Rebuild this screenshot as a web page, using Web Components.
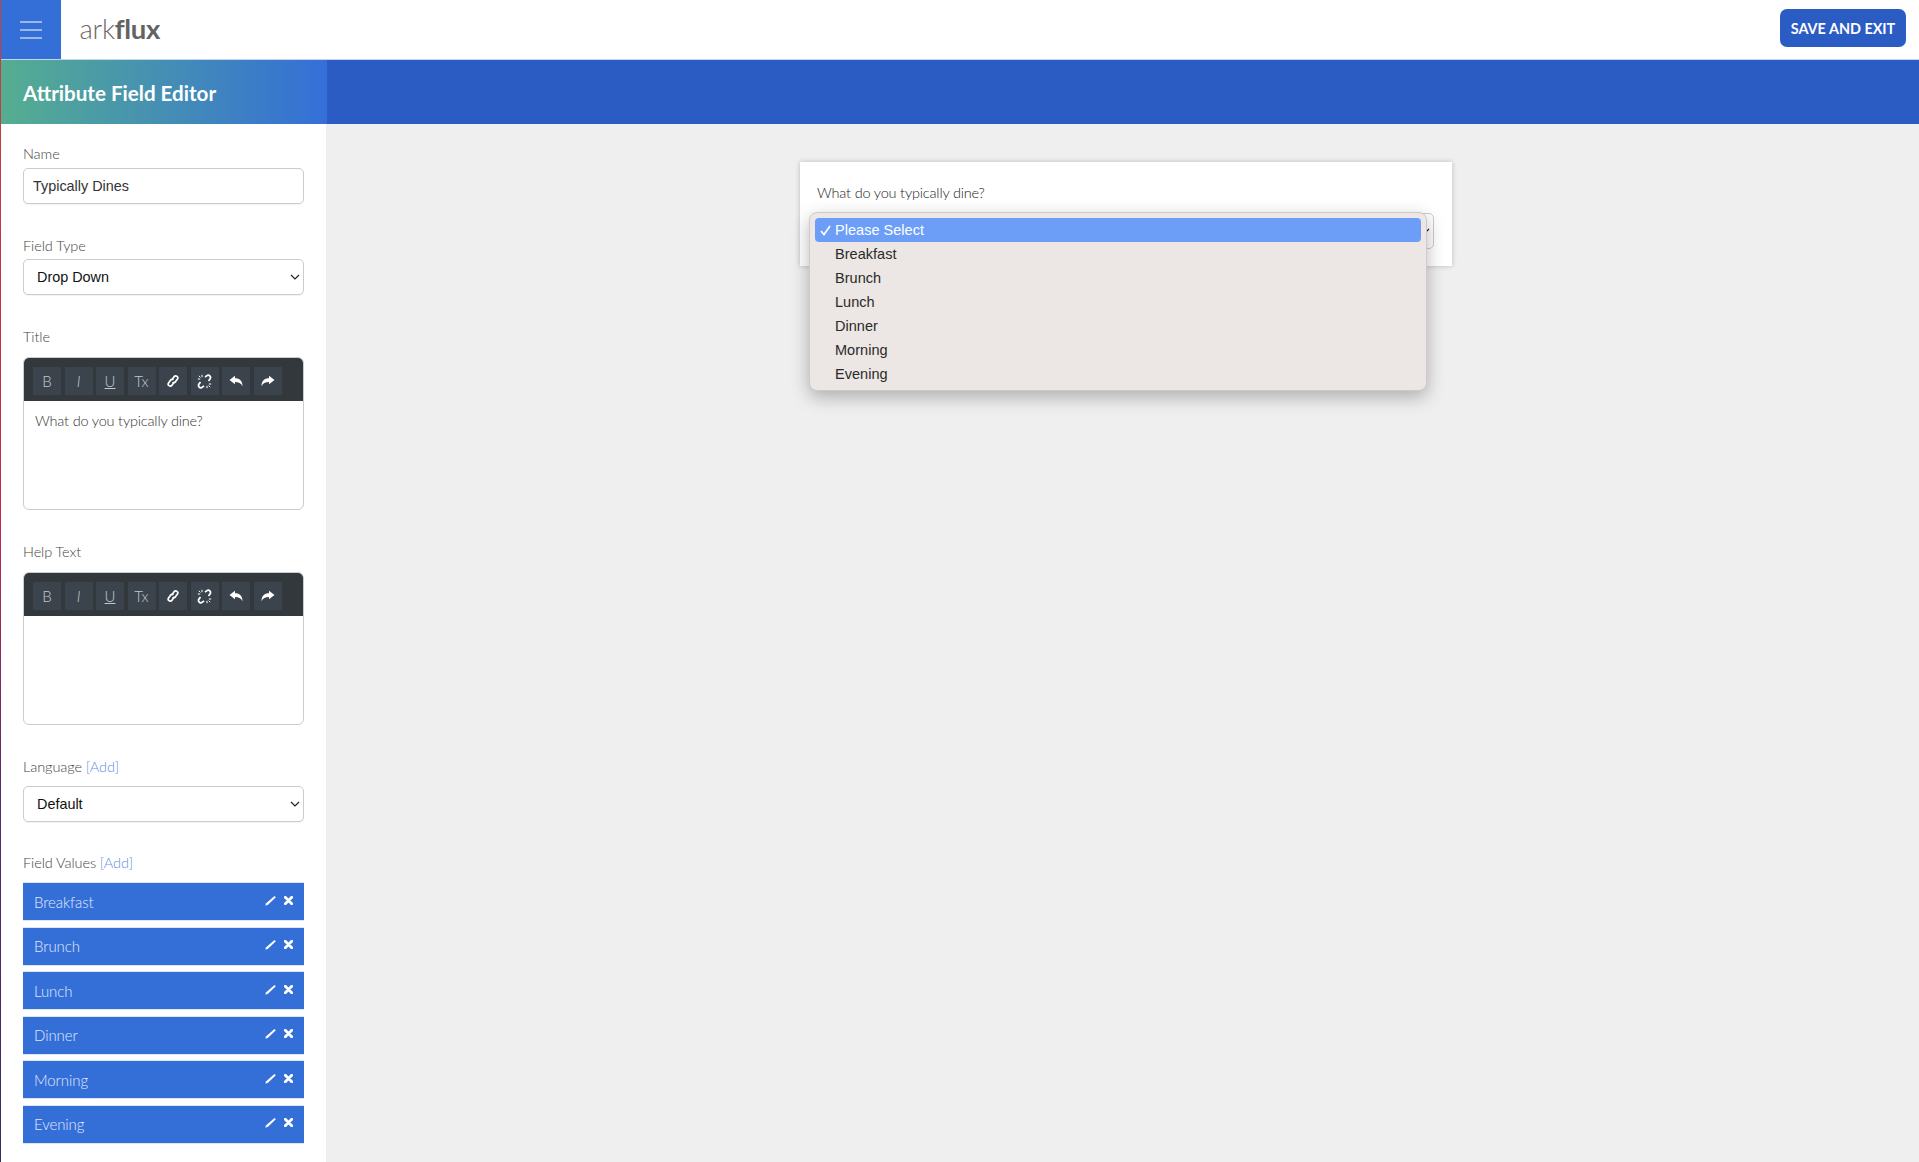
<!DOCTYPE html>
<html lang="en">
<head>
<meta charset="utf-8">
<title>Attribute Field Editor</title>
<style>
  html, body { margin: 0; height: 100%; background: #efefef; overflow: hidden; }
  body { font-family: Lato, "Liberation Sans", sans-serif; }
</style>
</head>
<body>

<app-shell>
  <app-header slot="header"></app-header>
  <title-band slot="band">Attribute Field Editor</title-band>
  <div slot="side">
    <field-group label="Name" gap="4">
      <text-input value="Typically Dines"></text-input>
    </field-group>
    <field-group label="Field Type" gap="3">
      <select-box value="Drop Down"></select-box>
    </field-group>
    <field-group label="Title" gap="10">
      <rich-editor>What do you typically dine?</rich-editor>
    </field-group>
    <field-group label="Help Text" gap="10">
      <rich-editor></rich-editor>
    </field-group>
    <field-group label="Language" add gap="9" style="margin-bottom:31px">
      <select-box value="Default"></select-box>
    </field-group>
    <field-group label="Field Values" add gap="9">
      <value-item>Breakfast</value-item>
      <value-item>Brunch</value-item>
      <value-item>Lunch</value-item>
      <value-item>Dinner</value-item>
      <value-item>Morning</value-item>
      <value-item>Evening</value-item>
    </field-group>
  </div>
  <preview-card slot="main" title-text="What do you typically dine?">
    <option-menu>
      <menu-option selected>Please Select</menu-option>
      <menu-option>Breakfast</menu-option>
      <menu-option>Brunch</menu-option>
      <menu-option>Lunch</menu-option>
      <menu-option>Dinner</menu-option>
      <menu-option>Morning</menu-option>
      <menu-option>Evening</menu-option>
    </option-menu>
  </preview-card>
</app-shell>

<script>
const chevron = `<svg width="10" height="6" viewBox="0 0 10 6"><path d="M1 1l4 4 4-4" fill="none" stroke="#222" stroke-width="1.2"/></svg>`;

class AppShell extends HTMLElement {
  connectedCallback() {
    this.attachShadow({ mode: 'open' });
    this.shadowRoot.innerHTML = `
      <style>
        :host {
          display: grid;
          grid-template-columns: 325px 1fr;
          grid-template-rows: 60px 64px 1fr;
          height: 1162px;
          box-sizing: border-box;
          border-left: 1px solid;
          border-image: linear-gradient(#c0443c 0, #c02a50 45%, #5a2a6a 68%, #3a2a66 100%) 1;
        }
        .head, .band { grid-column: 1 / 3; }
        .side { background: #fff; padding: 20px 22px 0; }
      </style>
      <div class="head"><slot name="header"></slot></div>
      <div class="band"><slot name="band"></slot></div>
      <div class="side"><slot name="side"></slot></div>
      <div><slot name="main"></slot></div>
    `;
  }
}

class AppHeader extends HTMLElement {
  connectedCallback() {
    this.attachShadow({ mode: 'open' });
    this.shadowRoot.innerHTML = `
      <style>
        :host { display: flex; align-items: stretch; height: 60px; background: #fff; box-sizing: border-box; border-bottom: 1px solid #c5d3ee; }
        .menu { width: 60px; background: #346fd8; display: flex; align-items: center; justify-content: center; }
        .logo { margin-left: 18.5px; align-self: center; font-size: 27.5px; font-weight: 300; color: #6a6a6a; letter-spacing: -0.3px; line-height: 1; margin-top: -1px; }
        .logo b { font-weight: 700; color: #636363; }
        .save {
          margin: 9px 13px 0 auto; height: 38px; width: 126px; box-sizing: border-box; border: 0; border-radius: 7px;
          background: #2a5cc4; color: #fff; font: 700 14.4px Lato, sans-serif; text-transform: uppercase; padding: 0;
        }
      </style>
      <div class="menu">
        <svg width="22" height="18" viewBox="0 0 22 18"><path d="M0 1h22M0 9h22M0 17h22" stroke="#fff" stroke-width="1.2"/></svg>
      </div>
      <div class="logo">ark<b>flux</b></div>
      <button class="save">Save and Exit</button>
    `;
  }
}

class TitleBand extends HTMLElement {
  connectedCallback() {
    this.attachShadow({ mode: 'open' });
    this.shadowRoot.innerHTML = `
      <style>
        :host { display: block; height: 64px; background: #2a5cc4; }
        .title {
          width: 326px; height: 64px; box-sizing: border-box; padding: 1px 0 0 22px;
          display: flex; align-items: center;
          background: linear-gradient(90deg, #55ae90, #346fd8);
          color: #fff; font: 700 20.6px Lato, sans-serif;
        }
      </style>
      <div class="title"><slot></slot></div>
    `;
  }
}

class FieldGroup extends HTMLElement {
  connectedCallback() {
    this.attachShadow({ mode: 'open' });
    const add = this.hasAttribute('add') ? ' <a>[Add]</a>' : '';
    this.shadowRoot.innerHTML = `
      <style>
        :host { display: block; margin-bottom: 32px; width: 281px; }
        .label { font: 300 14.5px/20px Lato, sans-serif; letter-spacing: -.08px; color: #444; margin-bottom: ${this.getAttribute('gap')}px; }
        a { color: #5f8fe8; }
      </style>
      <div class="label">${this.getAttribute('label')}${add}</div>
      <slot></slot>
    `;
  }
}

class TextInput extends HTMLElement {
  connectedCallback() {
    this.attachShadow({ mode: 'open' });
    this.shadowRoot.innerHTML = `
      <style>
        :host { display: block; height: 36px; }
        input {
          width: 100%; height: 36px; box-sizing: border-box; padding: 0 9px; margin: 0;
          border: 1px solid #ccc; border-radius: 5px; outline: 0;
          font: 14.4px "Liberation Sans", sans-serif; color: #333; background: #fff;
          box-shadow: 0 1px 1px rgba(0,0,0,.05);
        }
      </style>
      <input type="text" value="${this.getAttribute('value')}">
    `;
  }
}

class SelectBox extends HTMLElement {
  connectedCallback() {
    this.attachShadow({ mode: 'open' });
    this.shadowRoot.innerHTML = `
      <style>
        :host { display: block; position: relative; height: 36px; }
        select {
          appearance: none; -webkit-appearance: none;
          width: 100%; height: 36px; box-sizing: border-box; padding: 0 13px; margin: 0;
          border: 1px solid #ccc; border-radius: 5px; outline: 0;
          font: 14.4px "Liberation Sans", sans-serif; color: #111; background: #fff;
          box-shadow: 0 1px 1px rgba(0,0,0,.05);
        }
        svg { position: absolute; right: 4px; top: 15px; }
      </style>
      <select><option>${this.getAttribute('value')}</option></select>
      ${chevron}
    `;
  }
}

const toolIcons = {
  link: `<svg width="14" height="14" viewBox="0 0 14 14" fill="none" stroke="#fff" stroke-width="1.7"><path d="M6.3 5.2l1.6-2.3c.9-1.1 2.2-1.3 3.1-.6s1 2 .3 3L9.6 7.6c-.8 1-2 1.2-2.9.5"/><path d="M7.7 8.8L6.1 11.1c-.9 1.1-2.2 1.3-3.1.6s-1-2-.3-3l1.7-2.3c.8-1 2-1.2 2.9-.5"/></svg>`,
  unlink: `<svg width="15" height="15" viewBox="0 0 15 15" fill="none" stroke="#fff" stroke-width="1.7"><path d="M8 3.200L9.600 1.800c1.100-.9 2.400-.8 3.200.1s.9 2.200.1 3.200L11.500 6.900"/><path d="M7 11.800L5.400 13.200c-1.100.9-2.400.8-3.200-.1s-.9-2.200-.1-3.200L3.500 8.100"/><path d="M5 .8v2.400M.8 5h2.400M10 14.200v-2.400M14.200 10h-2.400M1.800 1.800l1.600 1.600M13.200 13.200l-1.600-1.600" stroke-width="1"/></svg>`,
  undo: `<svg width="14" height="12" viewBox="0 0 14 12"><path fill="#fff" d="M0.500 5L6 .8V3.200C10.500 3.200 13.500 5.600 13.500 11.200C12 8.300 9.800 7 6 7V9.300Z"/></svg>`,
  redo: `<svg width="14" height="12" viewBox="0 0 14 12"><path fill="#fff" d="M13.500 5L8 .8V3.200C3.500 3.200 .5 5.600 .5 11.200C2 8.300 4.200 7 8 7V9.300Z"/></svg>`
};

class RichEditor extends HTMLElement {
  connectedCallback() {
    this.attachShadow({ mode: 'open' });
    this.shadowRoot.innerHTML = `
      <style>
        :host { display: block; height: 153px; box-sizing: border-box; border: 1px solid #ccc; border-radius: 6px; overflow: hidden; background: #fff; }
        .bar { height: 43px; box-sizing: border-box; background: #33383d; padding: 9px 0 0 9px; display: flex; gap: 3.500px; }
        .btn {
          width: 28px; height: 28px; background: #3b444c; color: #c2c8cd;
          display: flex; align-items: center; justify-content: center;
          font: 300 15px Lato, sans-serif;
        }
        .body { padding: 10px 11px; font: 300 14.500px/20px Lato, sans-serif; letter-spacing: -.18px; color: #333; }
      </style>
      <div class="bar">
        <span class="btn">B</span>
        <span class="btn"><i>I</i></span>
        <span class="btn"><u>U</u></span>
        <span class="btn">Tx</span>
        <span class="btn">${toolIcons.link}</span>
        <span class="btn">${toolIcons.unlink}</span>
        <span class="btn">${toolIcons.undo}</span>
        <span class="btn">${toolIcons.redo}</span>
      </div>
      <div class="body"><slot></slot></div>
    `;
  }
}

class ValueItem extends HTMLElement {
  connectedCallback() {
    this.attachShadow({ mode: 'open' });
    this.shadowRoot.innerHTML = `
      <style>
        :host {
          display: flex; align-items: center; height: 39px; box-sizing: border-box; margin-bottom: 5.500px;
          padding: 0 11px; background: #346fd8; border: 1px solid #dbe6f8; border-width: 1px 0;
          color: #e0e9fa; font: 300 15px Lato, sans-serif; letter-spacing: -.08px;
        }
        .txt { flex: 1; }
        .icons { display: flex; align-items: center; gap: 7px; margin-top: -3px; }
        svg { display: block; }
      </style>
      <span class="txt"><slot></slot></span>
      <span class="icons">
        <svg width="12" height="11" viewBox="0 0 12 11"><path d="M.3 10.700L1.200 8.300 9.500 1 10.800 2.300 3 9.700Z" fill="#fff"/></svg>
        <svg width="9" height="9" viewBox="0 0 9 9"><path d="M1.300 1.300l6.400 6.400M7.700 1.300L1.300 7.700" stroke="#fff" stroke-width="2.800" stroke-linecap="round"/></svg>
      </span>
    `;
  }
}

class PreviewCard extends HTMLElement {
  connectedCallback() {
    this.attachShadow({ mode: 'open' });
    this.shadowRoot.innerHTML = `
      <style>
        :host {
          display: block; position: relative; width: 652px; height: 104px; box-sizing: border-box;
          margin: 38px 0 0 474px; padding: 21px 18px 17px 17px;
          background: #fff; box-shadow: 0 0 5px rgba(0,0,0,.22);
        }
        .q { font: 300 14.500px/20px Lato, sans-serif; letter-spacing: -.18px; color: #222; margin-bottom: 10px; }
        .sel { position: relative; height: 36px; border: 1px solid #ccc; border-radius: 5px; box-sizing: border-box; }
        .sel svg { position: absolute; right: 3px; top: 14px; }
      </style>
      <div class="q">${this.getAttribute('title-text')}</div>
      <div class="sel">${chevron}</div>
      <slot></slot>
    `;
  }
}

class OptionMenu extends HTMLElement {
  connectedCallback() {
    this.attachShadow({ mode: 'open' });
    this.shadowRoot.innerHTML = `
      <style>
        :host {
          position: absolute; left: 9px; top: 50px; width: 618px; box-sizing: border-box;
          padding: 5px 5px 4px; background: #ece7e4; border: 1px solid #cfcac7; border-radius: 8px;
          box-shadow: 0 6px 18px rgba(0,0,0,.28);
        }
      </style>
      <slot></slot>
    `;
  }
}

class MenuOption extends HTMLElement {
  connectedCallback() {
    this.attachShadow({ mode: 'open' });
    const on = this.hasAttribute('selected');
    this.shadowRoot.innerHTML = `
      <style>
        :host {
          display: flex; align-items: center; height: 24px; padding-left: 20px; position: relative;
          border-radius: 4px; font: 14.500px "Liberation Sans", sans-serif; letter-spacing: .03px;
          color: ${on ? '#fff' : '#2a2a2a'}; background: ${on ? '#6c9ef8' : 'none'};
        }
        svg { position: absolute; left: 5px; top: 7px; }
      </style>
      ${on ? '<svg width="11" height="11" viewBox="0 0 11 11"><path d="M1 6l3 3.500L10 1" fill="none" stroke="#fff" stroke-width="1.700"/></svg>' : ''}
      <slot></slot>
    `;
  }
}

customElements.define('app-shell', AppShell);
customElements.define('app-header', AppHeader);
customElements.define('title-band', TitleBand);
customElements.define('field-group', FieldGroup);
customElements.define('text-input', TextInput);
customElements.define('select-box', SelectBox);
customElements.define('rich-editor', RichEditor);
customElements.define('value-item', ValueItem);
customElements.define('preview-card', PreviewCard);
customElements.define('option-menu', OptionMenu);
customElements.define('menu-option', MenuOption);
</script>
</body>
</html>
